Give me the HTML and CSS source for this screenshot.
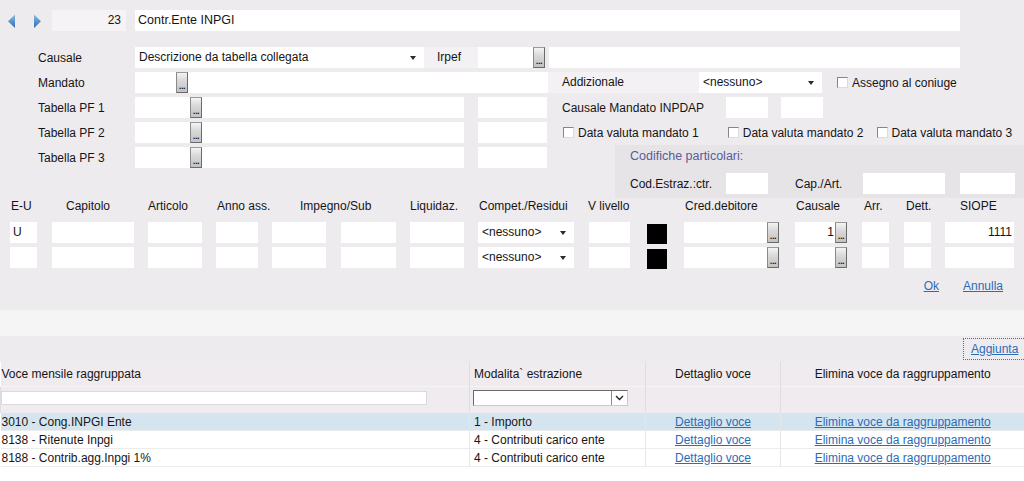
FILE: index.html
```html
<!DOCTYPE html>
<html lang="it">
<head>
<meta charset="utf-8">
<title>Voce raggruppata</title>
<link rel="stylesheet" href="styles.css">
</head>
<body>
<div class="form">
  <div class="row row1">
    <svg class="nav" width="44" height="21" viewBox="0 0 44 21">
      <defs>
        <linearGradient id="ng" x1="0" y1="0" x2="0" y2="1">
          <stop offset="0" stop-color="#8dbbe8"/>
          <stop offset="1" stop-color="#2d6cb2"/>
        </linearGradient>
      </defs>
      <polygon points="15,4.5 15,18 8,11.2" fill="url(#ng)"/>
      <polygon points="34,4.5 34,18 41,11.2" fill="url(#ng)"/>
    </svg>
    <div class="inp num">23</div>
    <div class="inp title">Contr.Ente INPGI</div>
  </div>

  <div class="row frow">
    <div class="lbl">Causale</div>
    <div class="inp sel w289"><span>Descrizione da tabella collegata</span><i class="arr"></i></div>
    <div class="lbox irpef">Irpef</div>
    <div class="inp w55"></div>
    <div class="btn">...</div>
    <div class="inp w411 ml4"></div>
  </div>

  <div class="row frow">
    <div class="lbl">Mandato</div>
    <div class="inp fld w413 pl41"><div class="btn">...</div></div>
    <div class="lbox addiz">Addizionale</div>
    <div class="inp sel w123"><span>&lt;nessuno&gt;</span><i class="arr"></i></div>
    <div class="chk ml15"></div>
    <div class="ctext">Assegno al coniuge</div>
  </div>

  <div class="row frow">
    <div class="lbl">Tabella PF 1</div>
    <div class="inp fld w329 pl55"><div class="btn">...</div></div>
    <div class="inp w69 ml14"></div>
    <div class="plain w179 pl15">Causale Mandato INPDAP</div>
    <div class="inp w42"></div>
    <div class="inp w42 ml13"></div>
  </div>

  <div class="row frow">
    <div class="lbl">Tabella PF 2</div>
    <div class="inp fld w329 pl55"><div class="btn">...</div></div>
    <div class="inp w69 ml14"></div>
    <div class="chk ml16"></div>
    <div class="ctext">Data valuta mandato 1</div>
    <div class="chk ml29"></div>
    <div class="ctext">Data valuta mandato 2</div>
    <div class="chk ml13"></div>
    <div class="ctext">Data valuta mandato 3</div>
  </div>

  <div class="row6">
    <div class="row">
      <div class="lbl">Tabella PF 3</div>
      <div class="inp fld w329 pl55"><div class="btn">...</div></div>
      <div class="inp w69 ml14"></div>
    </div>
    <div class="panel">
      <div class="ptitle">Codifiche particolari:</div>
      <div class="row prow">
        <div class="plain w96">Cod.Estraz.:ctr.</div>
        <div class="inp w42"></div>
        <div class="plain w68 ml27">Cap./Art.</div>
        <div class="inp w82"></div>
        <div class="inp w55 ml15"></div>
      </div>
    </div>
  </div>

  <div class="ghead">
    <span class="h1">E-U</span>
    <span class="h2">Capitolo</span>
    <span class="h3">Articolo</span>
    <span class="h4">Anno ass.</span>
    <span class="h5">Impegno/Sub</span>
    <span class="h6">Liquidaz.</span>
    <span class="h7">Compet./Residui</span>
    <span class="h8">V livello</span>
    <span class="h9">Cred.debitore</span>
    <span class="h10">Causale</span>
    <span class="h11">Arr.</span>
    <span class="h12">Dett.</span>
    <span>SIOPE</span>
  </div>

  <div class="row grow first">
    <div class="inp g1">U</div>
    <div class="inp g2"></div>
    <div class="inp g3"></div>
    <div class="inp g4"></div>
    <div class="inp g5"></div>
    <div class="inp g6"></div>
    <div class="inp g7"></div>
    <div class="inp sel g8"><span>&lt;nessuno&gt;</span><i class="arr"></i></div>
    <div class="inp g9"></div>
    <div class="blk"></div>
    <div class="inp g10"></div><div class="btn">...</div>
    <div class="inp g11 right">1</div><div class="btn">...</div>
    <div class="inp g12"></div>
    <div class="inp g13"></div>
    <div class="inp g14 right">1111</div>
  </div>
  <div class="row grow">
    <div class="inp g1"></div>
    <div class="inp g2"></div>
    <div class="inp g3"></div>
    <div class="inp g4"></div>
    <div class="inp g5"></div>
    <div class="inp g6"></div>
    <div class="inp g7"></div>
    <div class="inp sel g8"><span>&lt;nessuno&gt;</span><i class="arr"></i></div>
    <div class="inp g9"></div>
    <div class="blk"></div>
    <div class="inp g10"></div><div class="btn">...</div>
    <div class="inp g11 right"></div><div class="btn">...</div>
    <div class="inp g12"></div>
    <div class="inp g13"></div>
    <div class="inp g14 right"></div>
  </div>

  <div class="actions">
    <a href="#" class="lnk">Ok</a>
    <a href="#" class="lnk">Annulla</a>
  </div>
</div>

<div class="band"></div>

<div class="addbar">
  <a href="#" class="lnk addbtn">Aggiunta</a>
</div>

<div class="tablewrap">
  <table class="grid">
    <colgroup>
      <col class="c1"><col class="c2"><col class="c3"><col class="c4">
    </colgroup>
    <thead>
      <tr class="hd">
        <th class="t1">Voce mensile raggruppata</th>
        <th class="t2">Modalita` estrazione</th>
        <th class="ctr">Dettaglio voce</th>
        <th class="ctr">Elimina voce da raggruppamento</th>
      </tr>
      <tr class="flt">
        <td><div class="finp"></div></td>
        <td class="t2f">
          <div class="fsel">
            <span class="chev">
              <svg width="9" height="6" viewBox="0 0 9 6"><polyline points="1,1 4.5,4.5 8,1" fill="none" stroke="#222" stroke-width="1.4"/></svg>
            </span>
          </div>
        </td>
        <td></td>
        <td></td>
      </tr>
    </thead>
    <tbody>
      <tr class="sel-row">
        <td class="t1">3010 - Cong.INPGI Ente</td>
        <td class="t2">1 - Importo</td>
        <td class="ctr"><a href="#" class="lnk">Dettaglio voce</a></td>
        <td class="ctr"><a href="#" class="lnk">Elimina voce da raggruppamento</a></td>
      </tr>
      <tr>
        <td class="t1">8138 - Ritenute Inpgi</td>
        <td class="t2">4 - Contributi carico ente</td>
        <td class="ctr"><a href="#" class="lnk">Dettaglio voce</a></td>
        <td class="ctr"><a href="#" class="lnk">Elimina voce da raggruppamento</a></td>
      </tr>
      <tr>
        <td class="t1">8188 - Contrib.agg.Inpgi 1%</td>
        <td class="t2">4 - Contributi carico ente</td>
        <td class="ctr"><a href="#" class="lnk">Dettaglio voce</a></td>
        <td class="ctr"><a href="#" class="lnk">Elimina voce da raggruppamento</a></td>
      </tr>
    </tbody>
  </table>
</div>
</body>
</html>
```

FILE: styles.css
```css
html, body {
  margin: 0;
  padding: 0;
}
body {
  width: 1024px;
  height: 481px;
  overflow: hidden;
  background: #eeebef;
  font-family: "Liberation Sans", Arial, sans-serif;
  font-size: 12px;
  color: #151515;
}
.form {
  padding-top: 10px;
}
.row {
  display: flex;
  align-items: center;
  height: 21px;
}
.row > * {
  flex: none;
}
.row1 {
  margin-bottom: 16px;
}
.frow {
  margin-bottom: 4px;
}
.nav {
  display: block;
}
.inp {
  box-sizing: border-box;
  height: 21px;
  line-height: 21px;
  background: #ffffff;
  padding: 0 3px;
  white-space: nowrap;
  overflow: hidden;
}
.num {
  width: 74px;
  margin-left: 8px;
  background: #f5f3f5;
  text-align: right;
  padding-right: 5px;
}
.title {
  width: 825px;
  margin-left: 9px;
  font-size: 12.5px;
}
.lbl {
  box-sizing: border-box;
  width: 135px;
  padding-left: 38px;
  white-space: nowrap;
}
.lbox {
  box-sizing: border-box;
  height: 21px;
  line-height: 21px;
  background: #f3f1f3;
}
.irpef {
  width: 54px;
  padding-left: 13px;
}
.addiz {
  width: 151px;
  padding-left: 14px;
}
.plain {
  box-sizing: border-box;
  white-space: nowrap;
}
.sel {
  display: flex;
  align-items: center;
  padding-left: 4px;
}
.sel span {
  flex: 1;
  overflow: hidden;
}
.arr {
  display: block;
  width: 0;
  height: 0;
  border-left: 3px solid transparent;
  border-right: 3px solid transparent;
  border-top: 4px solid #2a2a2a;
  margin-right: 5px;
  margin-left: 4px;
}
.fld {
  display: flex;
  align-items: center;
}
.btn {
  box-sizing: border-box;
  width: 12px;
  height: 21px;
  border: 1px solid #6a6a6a;
  border-left-color: #8a8a8a;
  border-top-color: #9a9a9a;
  background: linear-gradient(to bottom, #f4f4f4 0%, #d9d9d9 40%, #c2c2c2 100%);
  font-family: "DejaVu Sans", sans-serif;
  font-size: 7px;
  font-weight: bold;
  line-height: 6px;
  color: #111;
  text-align: center;
  padding-top: 11px;
  letter-spacing: -0.5px;
  overflow: hidden;
  flex: none;
}
.chk {
  box-sizing: border-box;
  width: 11px;
  height: 11px;
  background: #ffffff;
  border: 1px solid;
  border-color: #858585 #dcdcdc #dcdcdc #858585;
}
.ctext {
  margin-left: 4px;
  white-space: nowrap;
}

.w42 { width: 42px; }
.w55 { width: 55px; }
.w68 { width: 68px; }
.w69 { width: 69px; }
.w82 { width: 82px; }
.w96 { width: 96px; }
.w123 { width: 123px; }
.w179 { width: 179px; }
.w289 { width: 289px; }
.w329 { width: 329px; }
.w411 { width: 411px; }
.w413 { width: 413px; }
.ml4 { margin-left: 4px; }
.ml13 { margin-left: 13px; }
.ml14 { margin-left: 14px; }
.ml15 { margin-left: 15px; }
.ml16 { margin-left: 16px; }
.ml27 { margin-left: 27px; }
.ml29 { margin-left: 29px; }
.pl15 { padding-left: 15px; }
.pl41 { padding-left: 41px; }
.pl55 { padding-left: 55px; }

.row6 {
  display: flex;
  align-items: flex-start;
}
.row6 > .row {
  flex: none;
}
.panel {
  flex: 1;
  margin-left: 68px;
  margin-top: -2px;
  height: 53px;
  box-sizing: border-box;
  background: #e7e4e8;
  padding-left: 15px;
}
.ptitle {
  height: 22px;
  line-height: 22px;
  color: #5a5a9c;
  font-size: 12.5px;
}
.prow {
  margin-top: 6px;
}

.ghead {
  display: flex;
  height: 17px;
  line-height: 17px;
  padding-left: 11px;
  white-space: nowrap;
}
.ghead span { flex: none; }
.h1 { width: 55px; }
.h2 { width: 82px; }
.h3 { width: 69px; }
.h4 { width: 83px; }
.h5 { width: 110px; }
.h6 { width: 69px; }
.h7 { width: 109px; }
.h8 { width: 97px; }
.h9 { width: 111px; }
.h10 { width: 68px; }
.h11 { width: 42px; }
.h12 { width: 54px; }

.grow {
  padding-left: 10px;
  margin-bottom: 4px;
}
.grow.first {
  margin-top: 7px;
}
.g1 { width: 27px; }
.g2 { width: 82px; margin-left: 15px; }
.g3 { width: 54px; margin-left: 14px; }
.g4 { width: 42px; margin-left: 14px; }
.g5 { width: 54px; margin-left: 14px; }
.g6 { width: 55px; margin-left: 15px; }
.g7 { width: 54px; margin-left: 14px; }
.g8 { width: 96px; margin-left: 14px; }
.g9 { width: 41px; margin-left: 15px; }
.g10 { width: 83px; margin-left: 17px; }
.g11 { width: 40px; margin-left: 16px; }
.g12 { width: 27px; margin-left: 15px; }
.g13 { width: 27px; margin-left: 15px; }
.g14 { width: 69px; margin-left: 14px; }
.right {
  text-align: right;
  padding-right: 1px;
}
.g14.right { padding-right: 2px; }
.blk {
  width: 20px;
  height: 20px;
  margin-left: 17px;
  background: #000;
  margin-top: 2px;
}

.lnk {
  color: #2b6cb8;
  text-decoration: underline;
}
.actions {
  display: flex;
  justify-content: flex-end;
  gap: 24px;
  height: 14px;
  line-height: 14px;
  margin-top: 11px;
  padding-right: 21px;
}

.band {
  margin-top: 17px;
  height: 26px;
  background: #f6f5f6;
}
.addbar {
  height: 26px;
  display: flex;
  justify-content: flex-end;
  align-items: flex-start;
}
.addbtn {
  margin-top: 2px;
  box-sizing: border-box;
  height: 22px;
  width: 63px;
  margin-right: -2px;
  line-height: 20px;
  padding-left: 7px;
  border: 1px dotted #6a6a6a;
}

.tablewrap {
  background: #ffffff;
  height: 119px;
}
.grid {
  width: 1024px;
  border-collapse: collapse;
  table-layout: fixed;
}
.c1 { width: 469px; }
.c2 { width: 176px; }
.c3 { width: 135px; }
.c4 { width: 244px; }
.grid th {
  font-weight: normal;
  text-align: left;
  height: 24px;
  padding: 0;
  background: #efebef;
  border-left: 1px solid #e0dce0;
  white-space: nowrap;
}
.grid th:first-child,
.grid td:first-child {
  border-left: 0;
}
.grid .flt td {
  height: 26px;
  padding: 0;
  background: #efebef;
  border-left: 1px solid #e0dce0;
  border-top: 1px solid #f6f4f6;
  vertical-align: middle;
}
.finp {
  box-sizing: border-box;
  width: 426px;
  height: 14px;
  background: #fff;
  border: 1px solid #dcd9dc;
  margin-bottom: 4px;
}
.t2f {
  padding-left: 2px !important;
}
.fsel {
  box-sizing: border-box;
  width: 155px;
  height: 16px;
  margin-left: 1px;
  margin-bottom: 4px;
  background: #fff;
  border: 1px solid;
  border-color: #6b6b6b #c9c9c9 #c9c9c9 #6b6b6b;
  display: flex;
  justify-content: flex-end;
}
.chev {
  box-sizing: border-box;
  width: 16px;
  height: 14px;
  border-left: 1px solid #8a8a8a;
  display: flex;
  align-items: center;
  justify-content: center;
}
.chev svg { display: block; }
.t1 { padding-left: 1px !important; }
.t2 { padding-left: 4px !important; }
.ctr { text-align: center !important; }
.grid tbody td {
  height: 17px;
  padding: 0;
  border-left: 1px solid #e6e6e6;
  border-bottom: 1px solid #ececec;
  white-space: nowrap;
  overflow: hidden;
  background: #ffffff;
}
.grid tbody tr.sel-row td {
  background: #d5e5ef;
}
```
